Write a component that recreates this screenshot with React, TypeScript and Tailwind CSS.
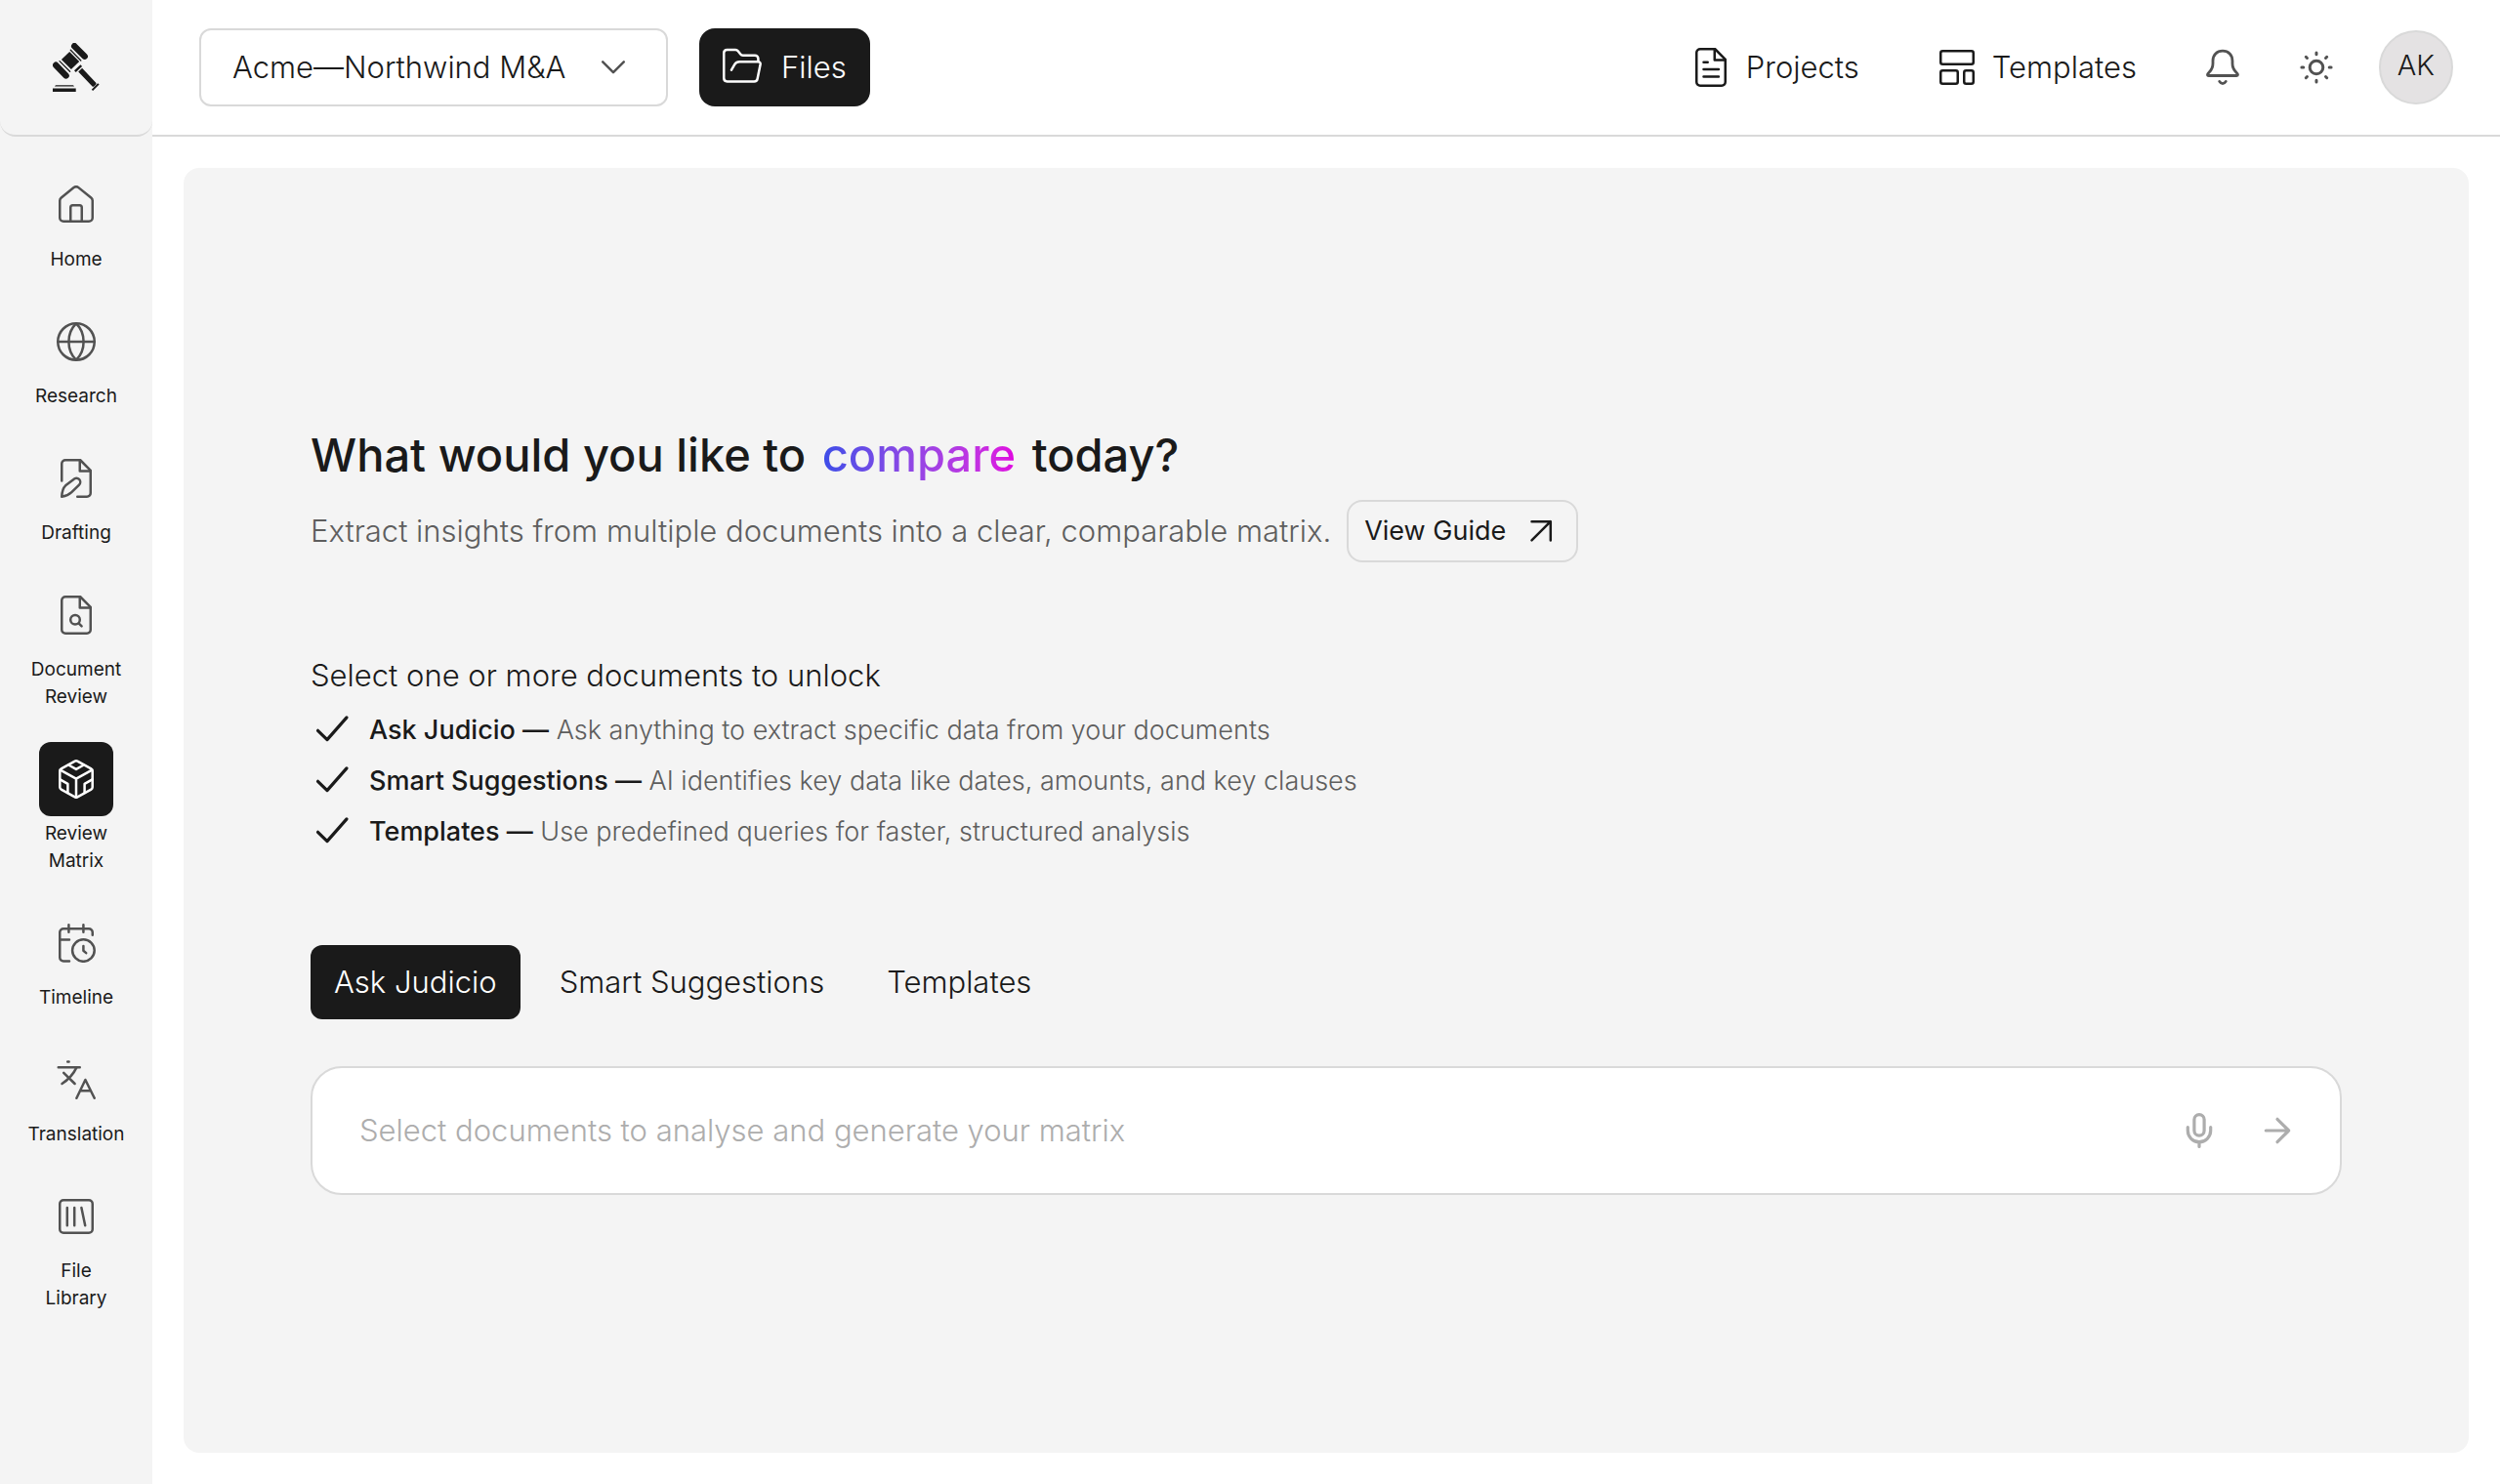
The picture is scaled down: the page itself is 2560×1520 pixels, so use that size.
import { ReactNode } from 'react';
import clsx from 'clsx';

interface IconProps {
  children: ReactNode;
  className?: string;
  strokeWidth?: number;
}

function Icon({ children, className, strokeWidth = 2.5 }: IconProps) {
  return (
    <svg
      viewBox="0 0 40 40"
      fill="none"
      stroke="currentColor"
      strokeWidth={strokeWidth}
      strokeLinecap="round"
      strokeLinejoin="round"
      aria-hidden="true"
      className={clsx('size-10 shrink-0', className)}
    >
      {children}
    </svg>
  );
}

const HomeIcon = (
  <Icon>
    <path d="M3.25 15.6c0-1.3.5-2.4 1.5-3.2L17.6 2.1a3.8 3.8 0 0 1 4.8 0l12.85 10.3c1 .8 1.5 1.9 1.5 3.2V33A3.75 3.75 0 0 1 33 36.75H7A3.75 3.75 0 0 1 3.25 33Z" />
    <path d="M14.25 36.75V22.5c0-1.4.9-2.25 2.25-2.25h7c1.4 0 2.25.85 2.25 2.25v14.25" />
  </Icon>
);

const GlobeIcon = (
  <Icon>
    <circle cx="20" cy="20" r="18.75" />
    <path d="M1.25 20h37.5M20 1.25c5 4.9 7.6 11.2 7.6 18.75S25 33.85 20 38.75C15 33.85 12.4 27.55 12.4 20S15 6.15 20 1.25Z" />
  </Icon>
);

const DraftIcon = (
  <Icon>
    <path d="M5.25 22.5V5A3.75 3.75 0 0 1 9 1.25h15.2L34.75 11.8V35A3.75 3.75 0 0 1 31 38.75h-9.75" />
    <path d="M23.75 1.25V12.5h11" />
    <path d="M5.25 38.75c.2-5.2 1.1-8.8 3.9-11.4l8.3-6.4a3.9 3.9 0 0 1 5.6 5.6l-7.7 7.6c-2.8 2.7-5.5 3.9-10.1 4.6Z" />
  </Icon>
);

const DocSearchIcon = (
  <Icon>
    <path d="M9 1.25h15.2L34.75 11.8V35A3.75 3.75 0 0 1 31 38.75H9A3.75 3.75 0 0 1 5.25 35V5A3.75 3.75 0 0 1 9 1.25Z" />
    <path d="M23.75 1.25V12.5h11" />
    <circle cx="19" cy="24.7" r="4.8" />
    <path d="m22.6 28.3 3 3" />
  </Icon>
);

const MatrixIcon = (
  <Icon>
    <path d="M18.7 1.7a2.6 2.6 0 0 1 2.6 0l14 7.7c.9.5 1.4 1.3 1.4 2.3v16.6c0 1-.5 1.8-1.4 2.3l-14 7.7a2.6 2.6 0 0 1-2.6 0l-14-7.7a2.6 2.6 0 0 1-1.4-2.3V11.7c0-1 .5-1.8 1.4-2.3Z" />
    <path d="M3.7 10.6 20 19.7l16.3-9.1M20 19.7v19" />
    <path d="m12.2 5.5 7.8 4.4 7.8-4.4M3.5 20.4l7.9 4.4v9.3M36.5 20.4l-7.9 4.4v9.3" />
  </Icon>
);

const TimelineIcon = (
  <Icon>
    <path d="M13 38.5H7a3.75 3.75 0 0 1-3.75-3.75V9.1A3.75 3.75 0 0 1 7 5.35h26a3.75 3.75 0 0 1 3.75 3.75v2.7" />
    <path d="M12.4 1.25v7.5M27.4 1.25v7.5M3.25 16.4H13" />
    <circle cx="27.4" cy="27.5" r="11.3" />
    <path d="M27.4 23v4.7l2.8 2.4" />
  </Icon>
);

const TranslateIcon = (
  <Icon>
    <path d="M11.2 1.5h1.4M1.75 7.2h22" />
    <path d="M20.4 7.4c-3.4 7.2-8.4 12.4-14.9 16.6M7.2 12.8 18.6 24" />
    <path d="M20.4 38.75 29.4 20l9.3 18.75M24 31.2h10.9" />
  </Icon>
);

const LibraryIcon = (
  <Icon>
    <rect x="3.25" y="3.25" width="33.5" height="33.5" rx="3.75" />
    <path d="M10.8 10.9v18.3M18.2 10.9v18.3M25.4 10.9l3.8 18.3" />
  </Icon>
);

const ProjectsIcon = (
  <Icon>
    <path d="M9 1.25h15.2L34.75 11.8V35A3.75 3.75 0 0 1 31 38.75H9A3.75 3.75 0 0 1 5.25 35V5A3.75 3.75 0 0 1 9 1.25Z" />
    <path d="M23.75 1.25V12.5h11M12.5 14.8h4.2M12.5 22h15.4M12.5 29.4h15.4" />
  </Icon>
);

const TemplatesIcon = (
  <Icon>
    <rect x="3.25" y="3.25" width="33.5" height="13.5" rx="2" />
    <rect x="3.25" y="23.25" width="17.5" height="13.5" rx="2" />
    <rect x="27.25" y="23.25" width="9.5" height="13.5" rx="2" />
  </Icon>
);

const BellIcon = (
  <Icon strokeWidth={2.8}>
    <path d="M20 3.2c-6 0-10 4.300-10 10v2.800c0 4-1.200 6.400-3.600 8.800-1.200 1.200-1.900 2-1.900 2.800 0 .6.500.9 1.200.9h28.600c.7 0 1.200-.3 1.200-.9 0-.8-.7-1.600-1.900-2.800-2.400-2.400-3.600-4.800-3.600-8.800v-2.800c0-5.700-4-10-10-10Z" />
    <path d="M16.700 34.400c1.700 2.900 4.900 2.900 6.600 0" />
  </Icon>
);

const SunIcon = (
  <Icon strokeWidth={3}>
    <circle cx="20" cy="20" r="6.8" />
    <path d="M20 4.900v1.900M20 33.200v1.900M4.900 20h1.900M33.200 20h1.900M9.300 9.300l1.200 1.200M29.500 29.500l1.200 1.200M9.300 30.700l1.200-1.200M29.500 10.500l1.200-1.200" />
  </Icon>
);

const FolderIcon = (
  <Icon>
    <path d="M36.400 13.700v-2.700c0-1.900-1.500-3.300-3.400-3.300H20.600c-1 0-1.700-.4-2.300-1.200l-2.600-3.300c-.7-.9-1.500-1.300-2.600-1.300H4.600c-2 0-3.350 1.400-3.350 3.350v25.800c0 2 1.400 3.400 3.350 3.400h27.700c1.700 0 3-1 3.300-2.700l3-14.700c.3-1.700-.7-2.900-2.400-2.900H17.300c-2 0-3.700.6-4.800 2.400L9 22.600" />
  </Icon>
);

function GavelLogo() {
  return (
    <svg viewBox="0 0 48 50" className="w-12 text-[#1a1a1a]" fill="currentColor" aria-hidden="true">
      <g stroke="currentColor" fill="none" strokeLinecap="round">
        <path d="m22.200 3.200 10.500 10.500" strokeWidth="6.400" />
        <path d="m3.200 22.700 10.400 10.700" strokeWidth="6.400" />
        <path d="m18.300 7.300 10.500 10.700M7 18.600l10.600 10.600" strokeWidth="1.300" />
      </g>
      <path d="M17.200 8.900 27.200 18.900 18.900 26.900 8.900 17.100Z" />
      <path d="m22 28.300 6.400-6.100 1.700 1.700-6.400 6.200Z" />
      <path d="m26.200 29.600 3.900-3.900 13.900 14.800c.7.800.7 1.500 0 2.200l-1.500 1.500c-.7.7-1.500.7-2.200 0Z" />
      <path d="m39.800 47.800 6.300-6.600 1.500 1.200-6.500 6.700Z" />
      <path d="M0 46.400h23.700V50H0ZM2 44.600c.4-.9 1-1.400 2-1.400h16c1 0 1.600.5 2 1.400Z" />
    </svg>
  );
}

const navItems = [
  { label: 'Home', icon: HomeIcon },
  { label: 'Research', icon: GlobeIcon },
  { label: 'Drafting', icon: DraftIcon },
  { label: 'Document Review', icon: DocSearchIcon },
  { label: 'Review Matrix', icon: MatrixIcon, active: true },
  { label: 'Timeline', icon: TimelineIcon },
  { label: 'Translation', icon: TranslateIcon },
  { label: 'File Library', icon: LibraryIcon },
];

const features = [
  { name: 'Ask Judicio', text: 'Ask anything to extract specific data from your documents' },
  { name: 'Smart Suggestions', text: 'AI identifies key data like dates, amounts, and key clauses' },
  { name: 'Templates', text: 'Use predefined queries for faster, structured analysis' },
];

const tabs = ['Ask Judicio', 'Smart Suggestions', 'Templates'];

function Sidebar() {
  return (
    <aside className="flex w-[156px] shrink-0 flex-col bg-[#f4f4f4]">
      <a
        href="#"
        aria-label="Judicio"
        className="flex h-[140px] items-center justify-center rounded-b-2xl border-b-2 border-[#d9d9d9]"
      >
        <GavelLogo />
      </a>
      <nav className="flex flex-col items-center gap-8 pt-8">
        {navItems.map((item) => (
          <a key={item.label} href="#" className="flex w-[92px] flex-col items-center gap-1">
            <span
              className={clsx(
                'flex size-[76px] items-center justify-center rounded-xl',
                item.active ? 'bg-[#1a1a1a] text-white' : 'text-[#525252]',
              )}
            >
              {item.icon}
            </span>
            <span className="text-center text-[19px] leading-7 text-[#1a1a1a]">{item.label}</span>
          </a>
        ))}
      </nav>
    </aside>
  );
}

function Header() {
  return (
    <header className="flex h-[140px] items-center justify-between border-b-2 border-[#d9d9d9] pr-12 pl-12">
      <div className="flex items-center gap-8">
        <div className="relative">
          <select
            aria-label="Project"
            className="h-20 w-[480px] appearance-none rounded-xl border-2 border-[#d9d9d9] bg-white pr-20 pl-8 text-[31px] font-light"
          >
            <option>Acme—Northwind M&amp;A</option>
          </select>
          <Icon className="pointer-events-none absolute top-5 right-9 text-[#525252]">
            <path d="m9.200 14.400 10.800 10.800 10.800-10.800" />
          </Icon>
        </div>
        <button className="flex h-20 items-center gap-5 rounded-2xl bg-[#1a1a1a] px-6 font-light text-white">
          {FolderIcon}
          Files
        </button>
      </div>
      <div className="flex items-center">
        <a href="#" className="mr-10 flex h-20 items-center gap-4 px-5 font-light">
          {ProjectsIcon}
          Projects
        </a>
        <a href="#" className="mr-7 flex h-20 items-center gap-4 px-5 font-light">
          {TemplatesIcon}
          Templates
        </a>
        <button aria-label="Notifications" className="mr-4 flex size-20 items-center justify-center text-[#525252]">
          {BellIcon}
        </button>
        <button aria-label="Toggle theme" className="mr-6 flex size-20 items-center justify-center text-[#525252]">
          {SunIcon}
        </button>
        <button className="flex size-[76px] items-center justify-center rounded-full border-2 border-[#d9d9d9] bg-[#e4e2e3] pb-1 text-[29px] font-light">
          AK
        </button>
      </div>
    </header>
  );
}

export default function App() {
  return (
    <div className="flex min-h-screen bg-white font-['Inter',sans-serif] text-[31px] text-[#1a1a1a]">
      <Sidebar />
      <div className="flex min-w-0 flex-1 flex-col">
        <Header />
        <main className="m-8 flex flex-1 flex-col justify-center rounded-2xl bg-[#f4f4f4] px-[130px]">
          <h1 className="text-[47px] leading-[60px] font-medium">
            What would you like to{' '}
            <span className="mx-1 bg-linear-to-r from-[#3b4de8] to-[#e000e0] bg-clip-text text-transparent">
              compare
            </span>{' '}
            today?
          </h1>
          <div className="mt-4 flex items-center gap-4">
            <p className="font-light text-[#5e5e5e]">
              Extract insights from multiple documents into a clear, comparable matrix.
            </p>
            <a
              href="#"
              className="flex h-16 items-center gap-4 rounded-2xl border-2 border-[#d9d9d9] px-4 text-[27px]"
            >
              View Guide
              <Icon>
                <path d="M10.500 10.200h19.300v19.200M29.800 10.200 10.500 29.400" />
              </Icon>
            </a>
          </div>

          <section className="mt-24">
            <h2 className="leading-10 font-light">Select one or more documents to unlock</h2>
            <ul className="mt-4 flex flex-col gap-3">
              {features.map((feature) => (
                <li key={feature.name} className="flex items-center gap-5 text-[27px] leading-10">
                  <Icon strokeWidth={3.200}>
                    <path d="m7.500 20.300 9.500 9.300 20-22.700" />
                  </Icon>
                  <p className="font-light text-[#5e5e5e]">
                    <strong className="font-medium text-[#1a1a1a]">{feature.name} —</strong> {feature.text}
                  </p>
                </li>
              ))}
            </ul>
          </section>

          <div role="tablist" className="mt-24 flex gap-4">
            {tabs.map((tab, i) => (
              <button
                key={tab}
                role="tab"
                aria-selected={i === 0}
                className={clsx('h-[76px] rounded-xl px-6 font-light', i === 0 && 'bg-[#1a1a1a] text-white')}
              >
                {tab}
              </button>
            ))}
          </div>

          <form className="mt-12 flex h-[132px] items-center rounded-[32px] border-2 border-[#d9d9d9] bg-white pr-11 pl-12 text-[#adadad]">
            <input
              type="text"
              aria-label="Ask Judicio"
              placeholder="Select documents to analyse and generate your matrix"
              className="min-w-0 flex-1 bg-transparent font-light outline-none placeholder:text-[#adadad]"
            />
            <button type="button" aria-label="Dictate" className="mr-10">
              <Icon strokeWidth={3.200}>
                <rect x="14.900" y="3.600" width="10.200" height="21.600" rx="5.100" />
                <path d="M8.300 16.500v3.500a11.700 11.700 0 0 0 23.400 0v-3.500M20 32v4.500" />
              </Icon>
            </button>
            <button type="submit" aria-label="Send">
              <Icon strokeWidth={3.200}>
                <path d="M8.300 20h23.400M20 8.300 31.700 20 20 31.700" />
              </Icon>
            </button>
          </form>
        </main>
      </div>
    </div>
  );
}
